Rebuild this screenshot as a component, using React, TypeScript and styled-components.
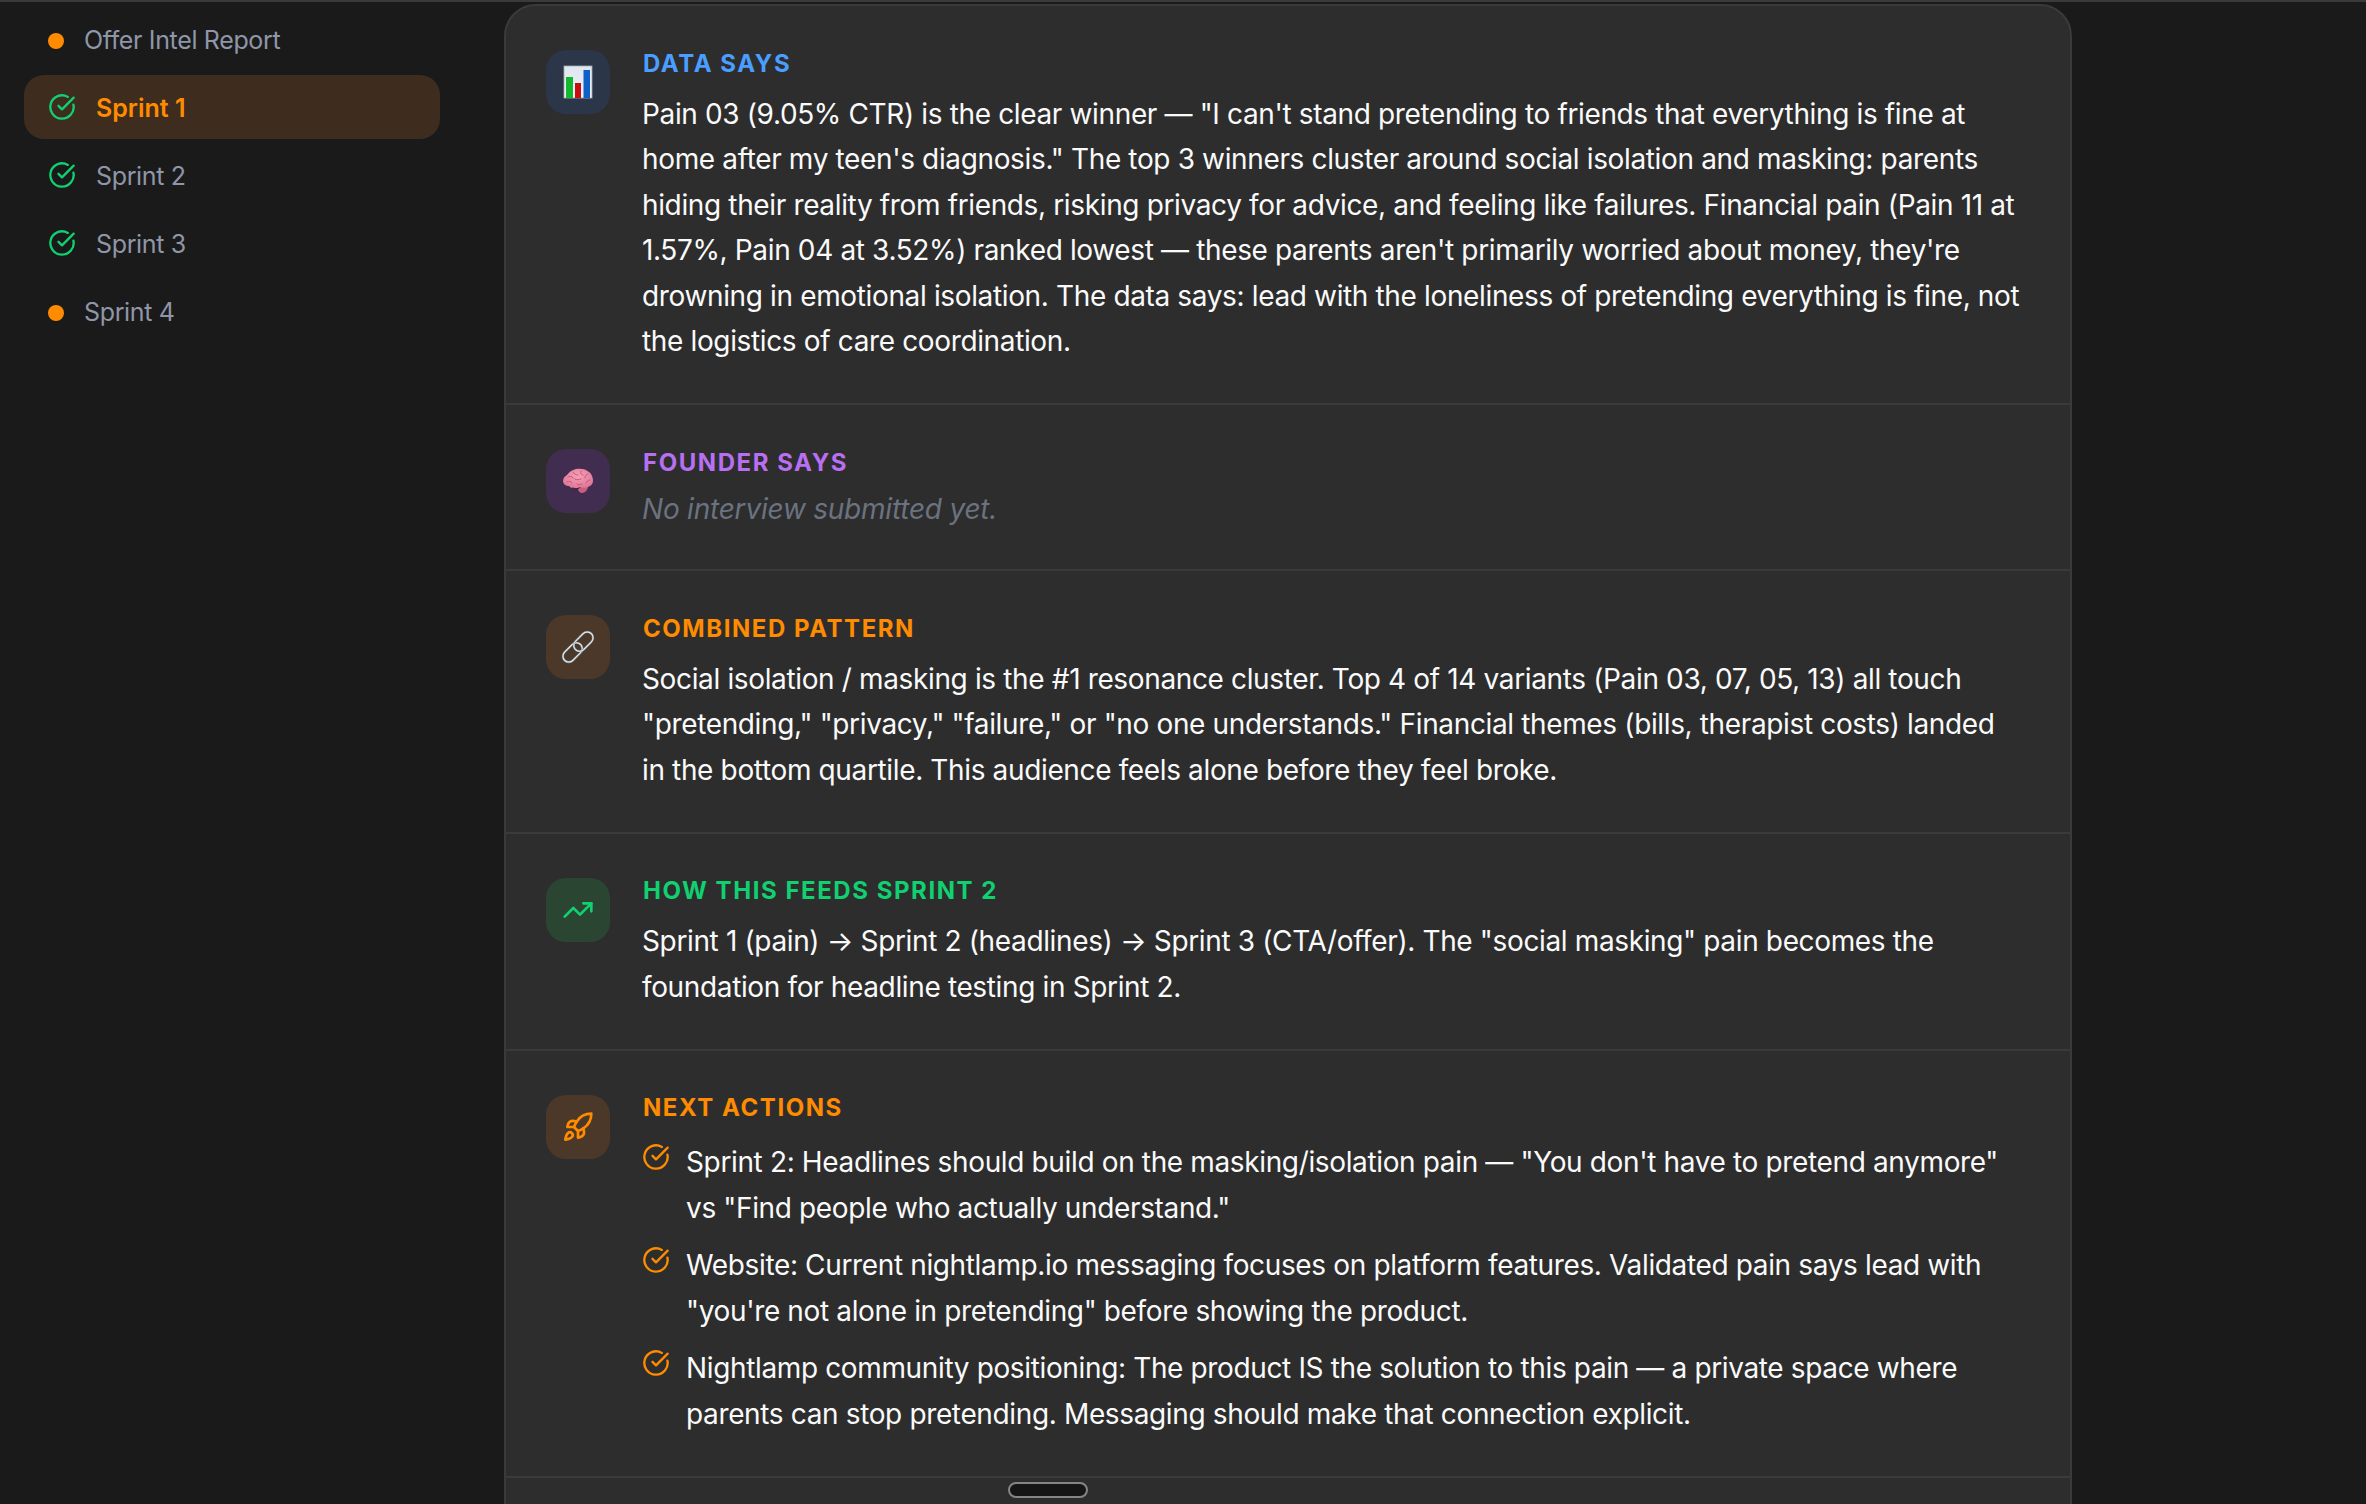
import React from "react";
import styled, { createGlobalStyle } from "styled-components";
import { CircleCheckBig, Rocket, TrendingUp } from "lucide-react";

const GlobalStyle = createGlobalStyle`
  html, body {
    margin: 0;
    padding: 0;
    background: #1a1a1a;
  }
  body {
    font-family: Inter, "Liberation Sans", sans-serif;
    -webkit-font-smoothing: antialiased;
  }
`;

const Page = styled.div`
  display: flex;
  height: 1504px;
  overflow: hidden;
  border-top: 2px solid #3a3a3a;
  box-sizing: border-box;
  background: #1a1a1a;
`;

const Sidebar = styled.nav`
  width: 464px;
  flex-shrink: 0;
  box-sizing: border-box;
  padding: 5px 24px 0;
  display: flex;
  flex-direction: column;
  gap: 4px;
`;

const NavRow = styled.div<{ $active?: boolean }>`
  height: 64px;
  display: flex;
  align-items: center;
  gap: 20px;
  padding-left: 24px;
  border-radius: 20px;
  font-size: 25px;
  letter-spacing: ${(p) => (p.$active ? "0" : "-0.35px")};
  font-weight: ${(p) => (p.$active ? 600 : 400)};
  color: ${(p) => (p.$active ? "#ff8c00" : "#8f96a8")};
  background: ${(p) => (p.$active ? "#3e2c1e" : "transparent")};
`;

const NavLabel = styled.span`
  padding-top: 1px;
`;

const Dot = styled.span`
  width: 16px;
  height: 16px;
  margin-top: 4px;
  border-radius: 50%;
  background: #ff8c00;
  flex-shrink: 0;
`;

const Main = styled.main`
  flex: 1;
  padding: 2px 0 0 40px;
`;

const Card = styled.div`
  width: 1568px;
  min-height: 1600px;
  box-sizing: border-box;
  background: #2d2d2d;
  border: 2px solid #3a3a3a;
  border-radius: 32px;
`;

const Section = styled.section`
  display: flex;
  gap: 32px;
  padding: 44px 40px 38.5px;
  border-bottom: 2px solid #3a3a3a;
`;

const IconBox = styled.div<{ $bg: string; $color?: string }>`
  width: 64px;
  height: 64px;
  flex-shrink: 0;
  border-radius: 20px;
  display: flex;
  align-items: center;
  justify-content: center;
  background: ${(p) => p.$bg};
  color: ${(p) => p.$color || "#fff"};
`;

const Content = styled.div`
  flex: 1;
  min-width: 0;
  padding-top: 1.5px;
`;

const Title = styled.h3<{ $color: string }>`
  margin: 0 0 16px;
  padding-left: 1px;
  font-size: 24px;
  line-height: 24px;
  font-weight: 700;
  letter-spacing: 1.55px;
  text-transform: uppercase;
  color: ${(p) => p.$color};
`;

const Body = styled.p`
  margin: 0;
  max-width: 1381px;
  font-size: 28px;
  line-height: 45.5px;
  letter-spacing: -0.36px;
  color: #fafafa;
`;

const Empty = styled.p`
  margin: -3.5px 0 -2px;
  font-size: 28px;
  line-height: 45.5px;
  letter-spacing: -0.22px;
  font-style: italic;
  color: #6b7280;
`;

const ActionList = styled.ul`
  list-style: none;
  margin: 20px 0 0;
  padding: 0;
  display: flex;
  flex-direction: column;
  gap: 12px;
`;

const ActionItem = styled.li`
  display: flex;
  align-items: flex-start;
  gap: 16px;
  font-size: 28px;
  line-height: 45.5px;
  letter-spacing: -0.36px;
  color: #fafafa;

  svg {
    flex-shrink: 0;
    margin-top: 3px;
  }
`;

const ScrollPill = styled.div`
  position: absolute;
  left: 1008px;
  top: 1482px;
  width: 80px;
  height: 16px;
  box-sizing: border-box;
  background: #161616;
  border: 2px solid #858585;
  border-radius: 8px;
`;

function BarChartEmoji() {
  return (
    <svg width="32" height="36" viewBox="0 0 32 36">
      <defs>
        <linearGradient id="chartBg" x1="0" y1="0" x2="0" y2="1">
          <stop offset="0" stopColor="#dfe6ef" />
          <stop offset="1" stopColor="#eef1f6" />
        </linearGradient>
      </defs>
      <rect x="2" y="2" width="28" height="32" fill="url(#chartBg)" stroke="#a3abb5" strokeWidth="0.8" />
      <rect x="4" y="13" width="7" height="21" fill="#12b82e" />
      <rect x="13" y="19" width="6" height="15" fill="#c80f0f" />
      <rect x="21.500" y="6" width="6.500" height="28" fill="#0f5fc8" />
    </svg>
  );
}

function BrainEmoji() {
  return (
    <svg width="32" height="28" viewBox="0 0 32 28">
      <defs>
        <radialGradient id="brainFill" cx="0.5" cy="0.35" r="0.7">
          <stop offset="0" stopColor="#f6a0b6" />
          <stop offset="1" stopColor="#dd7394" />
        </radialGradient>
      </defs>
      <path d="M19 20c3 0 6 0 7-1 0 4-3 7-6 7-2 0-4-2-4-4z" fill="#c95f80" />
      <path
        d="M1 14c0-3 2-5 4-6 2-3 5-5 9-6 5-1 10 0 13 3 3 2 4 6 4 9 0 3-2 5-5 6-2 1-5 1-8 0-2 2-5 2-7 1-2 0-3-1-4-2-3 0-6-2-6-5z"
        fill="url(#brainFill)"
      />
      <path
        d="M6 10c2-1 4-1 5 1M11 5c1 2 3 3 5 3M19 4c-1 2 0 4 2 4M26 7c-2 0-3 2-3 4M5 15c2-1 4-1 5 1M13 12c2 1 4 1 6 0M28 13c-2 0-3 1-4 3M15 17c1 1 3 1 5 0"
        fill="none"
        stroke="#c9587a"
        strokeWidth="1"
        strokeLinecap="round"
      />
      <path d="M11 21c2 1 4 1 6 0" fill="none" stroke="#3a1f28" strokeWidth="1" strokeLinecap="round" />
    </svg>
  );
}

function LinkEmoji() {
  return (
    <svg width="36" height="36" viewBox="0 0 40 40">
      <g fill="none" transform="rotate(-45 20 20)">
        <rect x="-1" y="13.500" width="25" height="13" rx="6.500" stroke="#7f8c94" strokeWidth="2.400" />
        <rect x="-1" y="13.500" width="25" height="13" rx="6.500" stroke="#eef2f4" strokeWidth="1.100" />
        <rect x="16" y="13.500" width="25" height="13" rx="6.500" stroke="#7f8c94" strokeWidth="2.400" />
        <rect x="16" y="13.500" width="25" height="13" rx="6.500" stroke="#eef2f4" strokeWidth="1.100" />
      </g>
    </svg>
  );
}

const sprints = [
  { label: "Offer Intel Report", done: false },
  { label: "Sprint 1", done: true, active: true },
  { label: "Sprint 2", done: true },
  { label: "Sprint 3", done: true },
  { label: "Sprint 4", done: false },
];

const actions = [
  `Sprint 2: Headlines should build on the masking/isolation pain — "You don't have to pretend anymore" vs "Find people who actually understand."`,
  `Website: Current nightlamp.io messaging focuses on platform features. Validated pain says lead with "you're not alone in pretending" before showing the product.`,
  `Nightlamp community positioning: The product IS the solution to this pain — a private space where parents can stop pretending. Messaging should make that connection explicit.`,
];

export default function App() {
  return (
    <>
      <GlobalStyle />
      <Page>
        <Sidebar>
          {sprints.map((s) => (
            <NavRow key={s.label} $active={s.active}>
              {s.done ? <CircleCheckBig size={28} color="#10d070" /> : <Dot />}
              <NavLabel>{s.label}</NavLabel>
            </NavRow>
          ))}
        </Sidebar>
        <Main>
          <Card>
            <Section>
              <IconBox $bg="#2b3648">
                <BarChartEmoji />
              </IconBox>
              <Content>
                <Title $color="#4a9eff">Data Says</Title>
                <Body>
                  Pain 03 (9.05% CTR) is the clear winner — "I can't stand pretending to friends that everything is fine at
                  home after my teen's diagnosis." The top 3 winners cluster around social isolation and masking: parents
                  hiding their reality from friends, risking privacy for advice, and feeling like failures. Financial pain (Pain
                  11 at 1.57%, Pain 04 at 3.52%) ranked lowest — these parents aren't primarily worried about money, they're
                  drowning in emotional isolation. The data says: lead with the loneliness of pretending everything is fine, not
                  the logistics of care coordination.
                </Body>
              </Content>
            </Section>
            <Section>
              <IconBox $bg="#402d4f">
                <BrainEmoji />
              </IconBox>
              <Content>
                <Title $color="#b96ff2">Founder Says</Title>
                <Empty>No interview submitted yet.</Empty>
              </Content>
            </Section>
            <Section>
              <IconBox $bg="#4c3829">
                <LinkEmoji />
              </IconBox>
              <Content>
                <Title $color="#ff8c00">Combined Pattern</Title>
                <Body>
                  Social isolation / masking is the #1 resonance cluster. Top 4 of 14 variants (Pain 03, 07, 05, 13) all touch
                  "pretending," "privacy," "failure," or "no one understands." Financial themes (bills, therapist costs) landed
                  in the bottom quartile. This audience feels alone before they feel broke.
                </Body>
              </Content>
            </Section>
            <Section>
              <IconBox $bg="#2a4632" $color="#10d070">
                <TrendingUp size={32} />
              </IconBox>
              <Content>
                <Title $color="#10d070">How This Feeds Sprint 2</Title>
                <Body>
                  Sprint 1 (pain) → Sprint 2 (headlines) → Sprint 3 (CTA/offer). The "social masking" pain becomes the
                  foundation for headline testing in Sprint 2.
                </Body>
              </Content>
            </Section>
            <Section>
              <IconBox $bg="#4c3829" $color="#ff8c00">
                <Rocket size={32} />
              </IconBox>
              <Content>
                <Title $color="#ff8c00">Next Actions</Title>
                <ActionList>
                  {actions.map((a) => (
                    <ActionItem key={a}>
                      <CircleCheckBig size={28} color="#ff8c00" />
                      <span>{a}</span>
                    </ActionItem>
                  ))}
                </ActionList>
              </Content>
            </Section>
          </Card>
        </Main>
      </Page>
      <ScrollPill />
    </>
  );
}
